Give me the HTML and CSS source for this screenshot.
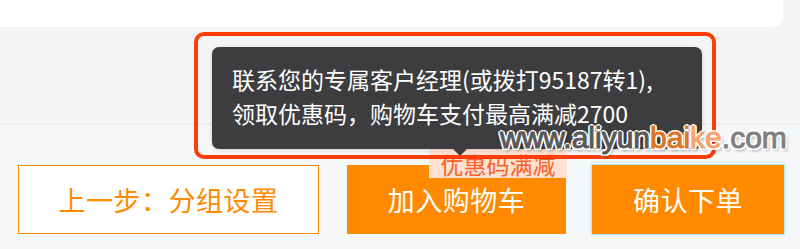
FILE: index.html
```html
<!DOCTYPE html>
<html lang="zh-CN">
<head>
<meta charset="utf-8">
<title>结算</title>
<link rel="stylesheet" href="styles.css">
</head>
<body>
<div class="page">
  <div class="top">
    <div class="card"></div>
  </div>
  <div class="footer">
    <button class="btn btn-outline">上一步：分组设置</button>
    <div class="btn-wrap">
      <button class="btn btn-solid">加入购物车</button>
      <span class="badge">优惠码满减</span>
    </div>
    <button class="btn btn-solid btn-focus">确认下单</button>
  </div>

  <div class="tooltip">联系您的专属客户经理(或拨打95187转1),<br>领取优惠码，购物车支付最高满减2700</div>
  <div class="highlight"></div>
  <div class="watermark"><span class="wm-gray">www.aliyun</span><span class="wm-orange">bai</span><span class="wm-light">ke</span><span class="wm-com">.com</span></div>
</div>
</body>
</html>
```

FILE: styles.css
```css
* { box-sizing: border-box; }
html, body {
  margin: 0;
  padding: 0;
}
body {
  width: 800px;
  height: 249px;
  overflow: hidden;
  background: #f6f7f9;
  font-family: "Noto Sans CJK SC", "Noto Sans", sans-serif;
}
.page {
  position: relative;
  width: 800px;
  height: 249px;
}
.top {
  height: 125px;
  background: #f3f4f6;
  border-bottom: 1px solid #e8e9ec;
}
.card {
  width: 783px;
  height: 27px;
  background: #ffffff;
  border-radius: 0 0 9px 0;
}
.footer {
  display: flex;
  align-items: flex-start;
  padding: 40px 0 0 18px;
}
.btn {
  height: 69px;
  margin: 0;
  padding: 0;
  border: none;
  font-family: "Noto Sans CJK SC", sans-serif;
  font-size: 27px;
  display: flex;
  align-items: center;
  justify-content: center;
  letter-spacing: 0.5px;
}
.btn-outline {
  width: 301px;
  background: #ffffff;
  color: #ff8a00;
  border: 1.5px solid #ff8a00;
}
.btn-wrap {
  position: relative;
  margin-left: 28px;
}
.btn-solid {
  background: #ff8a00;
  color: #ffffff;
}
.btn-wrap .btn-solid {
  width: 219px;
}
.btn-focus {
  width: 192px;
  margin-left: 26px;
  box-shadow: 0 0 0 1px #b5ecf4, 0 0 3px 1px #cfeff5;
}
.badge {
  position: absolute;
  right: -1px;
  top: -17px;
  width: 138px;
  height: 30px;
  background: #fde2d2;
  color: #f9602a;
  font-size: 23px;
  line-height: 32px;
  text-align: center;
}
.tooltip {
  position: absolute;
  left: 212px;
  top: 47px;
  width: 490px;
  height: 102px;
  padding: 15px 0 0 20px;
  background: #3d3d3f;
  color: #ffffff;
  border-radius: 7px;
  font-size: 23px;
  line-height: 34px;
  box-shadow: 0 1px 4px rgba(0,0,0,0.15);
}
.tooltip::after {
  content: "";
  position: absolute;
  left: 241px;
  bottom: -7px;
  border-left: 7px solid transparent;
  border-right: 7px solid transparent;
  border-top: 7px solid #3d3d3f;
}
.highlight {
  position: absolute;
  left: 194px;
  top: 32px;
  width: 522px;
  height: 127px;
  border: 4px solid #ff3d0a;
  border-radius: 10px;
}
.watermark {
  position: absolute;
  left: 500px;
  top: 123px;
  font-family: "Liberation Sans", Arial, sans-serif;
  font-size: 30px;
  line-height: 30px;
  white-space: nowrap;
  -webkit-text-stroke: 1px currentColor;
  text-shadow:
    -1.5px -1.5px 0 #fff, 1.5px -1.5px 0 #fff,
    -1.5px 1.5px 0 #fff, 1.5px 1.5px 0 #fff,
    0 2px 0 #fff, 0 -2px 0 #fff, 2px 0 0 #fff, -2px 0 0 #fff,
    2px 3px 3px rgba(0,0,0,0.35);
}
.wm-gray { color: #595959; }
.wm-orange { color: #de7428; }
.wm-light { color: #f7a472; }
.wm-com { color: #808080; }
```
